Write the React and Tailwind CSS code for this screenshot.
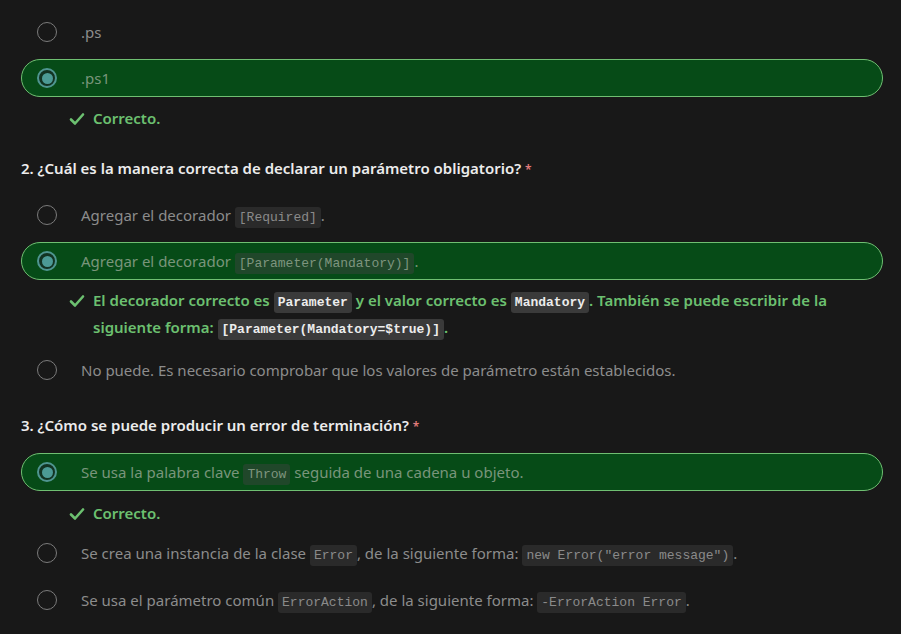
import React from "react";

const Code = ({ children, tone = "muted" }) => {
  const tones = {
    muted: "bg-[#2a2a2a] text-[#8a8a8a]",
    selected: "bg-[#20472a] text-[#7e957f]",
    strong: "bg-[#3a3a3a] text-[#ececec] font-bold",
  };
  return (
    <code
      className={`${tones[tone]} rounded-[3px] px-[4px] py-[3px] text-[13px] leading-none font-['Liberation_Mono',monospace]`}
    >
      {children}
    </code>
  );
};

const Radio = ({ checked }) =>
  checked ? (
    <span className="flex h-[20px] w-[20px] shrink-0 items-center justify-center rounded-full border-2 border-[#4f9590] bg-[#123322]">
      <span className="h-[11px] w-[11px] rounded-full bg-[#4c9a95]" />
    </span>
  ) : (
    <span className="h-[20px] w-[20px] shrink-0 rounded-full border-[1.5px] border-[#7b7b7b]" />
  );

const Option = ({ checked, children, className = "" }) => (
  <div
    className={`flex h-[38px] items-center rounded-[19px] border pl-[15px] ${
      checked
        ? "border-[#6fbf72] bg-[#064b17] text-[#79957b]"
        : "border-transparent text-[#8c8c8c]"
    } ${className}`}
  >
    <Radio checked={checked} />
    <span className="ml-[24px] text-[15px] leading-[24px]">{children}</span>
  </div>
);

const Check = () => (
  <svg
    width="16"
    height="14"
    viewBox="0 0 16 14"
    className="mt-[7px] shrink-0"
    fill="none"
    stroke="#6cc070"
    strokeWidth="2.6"
    strokeLinecap="round"
    strokeLinejoin="round"
  >
    <polyline points="2,7.5 6,11.5 14,2.5" />
  </svg>
);

const Feedback = ({ children, className = "" }) => (
  <div className={`flex pl-[48px] ${className}`}>
    <Check />
    <p className="ml-[8px] text-[15px] font-semibold leading-[27px] text-[#6cc070]">
      {children}
    </p>
  </div>
);

const Question = ({ children, className = "" }) => (
  <h3 className={`text-[15px] font-semibold leading-[24px] text-[#ececec] ${className}`}>
    {children} <span className="text-[12px] text-[#e07b7b]">*</span>
  </h3>
);

export default function App() {
  return (
    <div className="min-h-screen bg-[#181818] pl-[21px] pr-[18px] pt-[13px] font-['Noto_Sans',sans-serif]">
      <Option>.ps</Option>
      <Option checked className="mt-[8px]">.ps1</Option>
      <Feedback className="mt-[8px]">Correcto.</Feedback>

      <Question className="mt-[24px]">
        2. ¿Cuál es la manera correcta de declarar un parámetro obligatorio?
      </Question>
      <Option className="mt-[14px]">
        Agregar el decorador <Code>[Required]</Code>.
      </Option>
      <Option checked className="mt-[8px]">
        Agregar el decorador <Code tone="selected">[Parameter(Mandatory)]</Code>.
      </Option>
      <Feedback className="mt-[7px]">
        El decorador correcto es <Code tone="strong">Parameter</Code> y el valor correcto es{" "}
        <Code tone="strong">Mandatory</Code>. También se puede escribir de la siguiente forma:{" "}
        <Code tone="strong">[Parameter(Mandatory=$true)]</Code>.
      </Feedback>
      <Option className="mt-[10px]">
        No puede. Es necesario comprobar que los valores de parámetro están establecidos.
      </Option>

      <Question className="mt-[24px]">
        3. ¿Cómo se puede producir un error de terminación?
      </Question>
      <Option checked className="mt-[14px]">
        Se usa la palabra clave <Code tone="selected">Throw</Code> seguida de una cadena u objeto.
      </Option>
      <Feedback className="mt-[9px]">Correcto.</Feedback>
      <Option className="mt-[7px]">
        Se crea una instancia de la clase <Code>Error</Code>, de la siguiente forma:{" "}
        <Code>new Error("error message")</Code>.
      </Option>
      <Option className="mt-[9px]">
        Se usa el parámetro común <Code>ErrorAction</Code>, de la siguiente forma:{" "}
        <Code>-ErrorAction Error</Code>.
      </Option>
    </div>
  );
}
